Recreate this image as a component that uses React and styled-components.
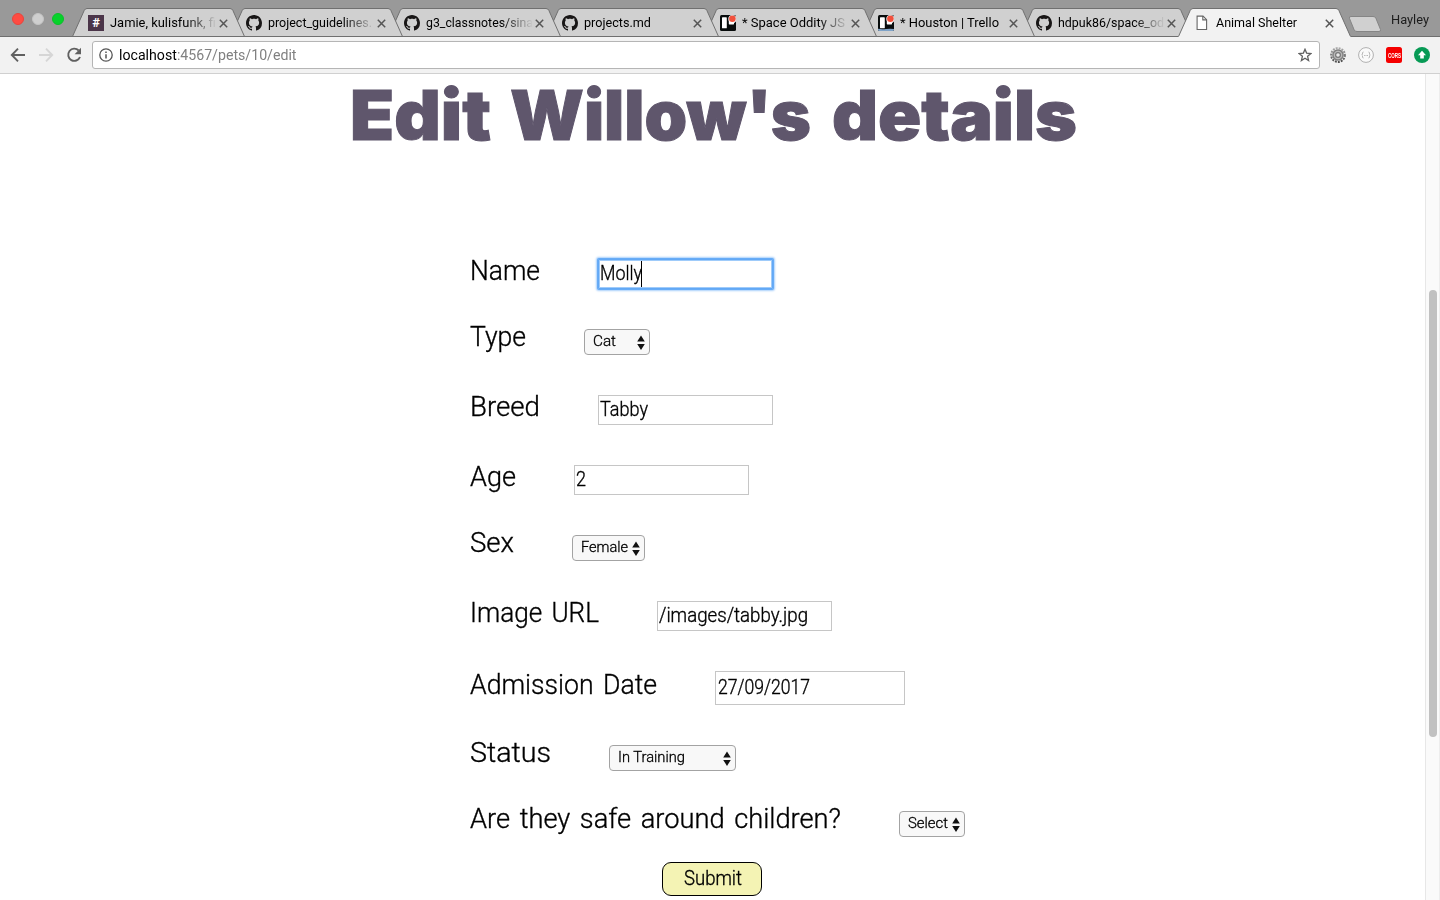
import React, { useLayoutEffect, useRef } from "react";
import styled, { createGlobalStyle } from "styled-components";

const GlobalStyle = createGlobalStyle`
  * { box-sizing: border-box; }
  html, body { margin: 0; padding: 0; background: #fff; overflow: hidden; }
  body { font-family: Roboto, "Liberation Sans", sans-serif; color: #000; }
  svg { display: block; flex: none; }
`;

const FitBox = styled.span`
  display: block;
  flex: none;
  width: ${(p) => p.$width}px;
  white-space: nowrap;
`;

const FitInner = styled.span`
  display: inline-block;
  transform-origin: 0 50%;
`;

/* Condenses or widens a run of text so it spans exactly `width` pixels. */
function FitText({ width, children }) {
  const ref = useRef(null);
  useLayoutEffect(() => {
    const el = ref.current;
    el.style.transform = "none";
    const natural = el.getBoundingClientRect().width;
    if (natural) el.style.transform = `scaleX(${width / natural})`;
  }, [width, children]);
  return (
    <FitBox $width={width}>
      <FitInner ref={ref}>{children}</FitInner>
    </FitBox>
  );
}

const Window = styled.div`
  width: 1440px;
  height: 900px;
  display: flex;
  flex-direction: column;
  overflow: hidden;
  background: #fff;
`;

/* ---------- tab strip ---------- */

const TabStrip = styled.header`
  display: flex;
  height: 37px;
  flex: none;
  background: #999;
  box-shadow: inset 0 -1px #6f6f6f;
`;

const Lights = styled.div`
  display: flex;
  gap: 8px;
  width: 72px;
  padding: 13px 0 0 12px;
  flex: none;
`;

const Light = styled.i`
  width: 12px;
  height: 12px;
  border-radius: 50%;
  background: ${(p) => p.$color};
  border: 1px solid ${(p) => p.$edge};
`;

const Tab = styled.div`
  display: grid;
  width: 173px;
  height: 37px;
  margin-right: -15px;
  flex: none;
  z-index: ${(p) => p.$level};
  > * { grid-area: 1 / 1; }
`;

const TabContent = styled.div`
  display: flex;
  align-items: center;
  padding: 9px 0 0 16px;
  z-index: 1;
`;

const TabIcon = styled.span`
  width: 16px;
  height: 16px;
  margin-right: 6px;
  flex: none;
`;

const TabTitle = styled.span`
  width: 109px;
  height: 18px;
  flex: none;
  font-size: 12.4px;
  line-height: 18px;
  ${(p) => p.$fade && `mask-image: linear-gradient(to right, #000 76px, transparent 107px);`}
`;

const SlackBadge = styled.span`
  display: flex;
  align-items: center;
  justify-content: center;
  width: 16px;
  height: 16px;
  background: #4b3549;
  color: #fff;
  font-size: 13px;
  font-weight: 700;
  line-height: 16px;
`;

const TabShape = ({ active }) => (
  <svg width="173" height="37" viewBox="0 0 173 37">
    <path
      d="M0 37 L1 35.5 L12.2 10.5 Q13.2 8.5 15 8.5 H158 Q160 8.5 160.9 10.5 L172 35.5 L173 37 Z"
      fill={active ? "#f2f2f2" : "#d0d0d0"}
    />
    <path
      d="M0.5 36.5 L12.2 10.5 Q13.2 8.5 15 8.5 H158 Q160 8.5 160.9 10.5 L172.5 36.5"
      fill="none"
      stroke="#707070"
      strokeWidth="1"
    />
    {!active && <path d="M0 36.5 H173" stroke="#6f6f6f" />}
  </svg>
);

const CloseIcon = () => (
  <svg width="9" height="9" viewBox="0 0 9 9">
    <path d="M.8 .8 L8.2 8.2 M8.2 .8 L.8 8.2" stroke="#555" strokeWidth="1.5" />
  </svg>
);

const GithubIcon = () => (
  <svg width="16" height="16" viewBox="0 0 16 16">
    <path
      fill="#181616"
      d="M8 0C3.58 0 0 3.58 0 8c0 3.54 2.29 6.53 5.47 7.59.4.07.55-.17.55-.38 0-.19-.01-.82-.01-1.49-2.01.37-2.53-.49-2.69-.94-.09-.23-.48-.94-.82-1.13-.28-.15-.68-.52-.01-.53.63-.01 1.08.58 1.23.82.72 1.21 1.87.87 2.33.66.07-.52.28-.87.51-1.07-1.78-.2-3.64-.89-3.64-3.95 0-.87.31-1.59.82-2.15-.08-.2-.36-1.02.08-2.12 0 0 .67-.21 2.2.82.64-.18 1.32-.27 2-.27.68 0 1.36.09 2 .27 1.53-1.04 2.2-.82 2.2-.82.44 1.1.16 1.92.08 2.12.51.56.82 1.27.82 2.15 0 3.07-1.87 3.75-3.65 3.95.29.25.54.73.54 1.48 0 1.07-.01 1.93-.01 2.2 0 .21.15.46.55.38A8.013 8.013 0 0016 8c0-4.42-3.58-8-8-8z"
    />
  </svg>
);

const TrelloIcon = ({ tint }) => (
  <svg width="16" height="16" viewBox="0 0 16 16">
    <rect width="16" height="16" rx="1.5" fill="#080c0c" />
    {tint && <path d="M0 13.8 Q4 14.6 8 14 T16 14 V14.5 Q16 16 14.5 16 H1.5 Q0 16 0 14.5 Z" fill="#7fa3c8" />}
    <rect x="2" y="2.3" width="4.8" height="11" rx=".6" fill="#fff" />
    <path d="M8.8 2.3 H14 V8.8 Q14 9.4 13.4 9.4 H9.4 Q8.8 9.4 8.8 8.8 Z" fill="#fff" />
    <circle cx="12.4" cy="4" r="4" fill="#fff" />
    <circle cx="12.4" cy="3.8" r="3.3" fill="#f0503c" />
  </svg>
);

const FileIcon = () => (
  <svg width="16" height="16" viewBox="0 0 16 16">
    <path d="M3.1 1.1 H9 L12.6 4.7 V14.5 H3.1 Z" fill="#fff" stroke="#666" strokeWidth="1.1" />
    <path d="M8.8 1.1 V4.9 H12.6" fill="none" stroke="#666" strokeWidth="1.1" />
  </svg>
);

const NewTab = styled.div`
  margin: 15px 0 0 12px;
  z-index: 20;
`;

const UserName = styled.div`
  margin: 11px 0 0 9px;
  font-size: 12.3px;
  line-height: 18px;
  color: #1c1c1c;
`;

const tabs = [
  { icon: "slack", title: "Jamie, kulisfunk, fi", width: 106, fade: true },
  { icon: "github", title: "project_guidelines.", width: 104, fade: true },
  { icon: "github", title: "g3_classnotes/sina", width: 107, fade: true },
  { icon: "github", title: "projects.md", width: 67 },
  { icon: "trello", title: "* Space Oddity JS", width: 103, fade: true },
  { icon: "trelloTint", title: "* Houston | Trello", width: 99 },
  { icon: "github", title: "hdpuk86/space_od", width: 106, fade: true },
  { icon: "file", title: "Animal Shelter", width: 81, active: true },
];

const favicons = {
  slack: <SlackBadge>#</SlackBadge>,
  github: <GithubIcon />,
  trello: <TrelloIcon />,
  trelloTint: <TrelloIcon tint />,
  file: <FileIcon />,
};

/* ---------- toolbar ---------- */

const Toolbar = styled.div`
  display: flex;
  align-items: center;
  height: 37px;
  flex: none;
  background: #f2f2f2;
  border-bottom: 1px solid #d0d0d0;
  padding: 0 10px;
`;

const NavIcons = styled.div`
  display: flex;
  align-items: center;
  gap: 12px;
  width: 82px;
`;

const AddressBar = styled.div`
  display: flex;
  align-items: center;
  width: 1228px;
  height: 28px;
  padding: 0 7px 0 6px;
  border: 1px solid #b5b5b5;
  border-radius: 3px;
  background: #fff;
`;

const Url = styled.div`
  flex: 1;
  margin-left: 6px;
  font-size: 14px;
  line-height: 20px;
  color: #808080;
  b { font-weight: 400; color: #000; }
`;

const Extensions = styled.div`
  display: flex;
  gap: 12px;
  margin-left: 10px;
`;

const CorsBadge = styled.span`
  display: flex;
  align-items: center;
  width: 16px;
  height: 16px;
  border-radius: 2.5px;
  background: #f50000;
  color: #fff;
  font: 700 7.6px/15px "Liberation Sans", sans-serif;
  padding-left: 1.5px;
`;

const BackArrow = ({ color, flip }) => (
  <svg width="16" height="16" viewBox="0 0 16 16">
    <path
      d="M15 8 H2.2 M8 1.6 L1.8 8 L8 14.4"
      fill="none"
      stroke={color}
      strokeWidth="1.9"
      transform={flip ? "translate(16 0) scale(-1 1)" : undefined}
    />
  </svg>
);

const ReloadIcon = () => (
  <svg width="16" height="16" viewBox="0 0 16 16">
    <path d="M12.7 3.5 A6.1 6.1 0 1 0 14 10" fill="none" stroke="#606060" strokeWidth="1.9" />
    <path d="M15 .8 V7.2 H8.6 Z" fill="#606060" />
  </svg>
);

const InfoIcon = () => (
  <svg width="14" height="14" viewBox="0 0 14 14">
    <circle cx="7" cy="7" r="6.2" fill="none" stroke="#555" strokeWidth="1.3" />
    <path d="M7 6.2 V10.4 M7 3.4 V5" stroke="#555" strokeWidth="1.5" />
  </svg>
);

const StarIcon = () => (
  <svg width="14" height="14" viewBox="0 0 14 14">
    <path
      d="M7 1.3 L8.6 5.1 L12.9 5.5 L9.6 8.3 L10.6 12.5 L7 10.2 L3.4 12.5 L4.4 8.3 L1.1 5.5 L5.4 5.1 Z"
      fill="none"
      stroke="#606060"
      strokeWidth="1.3"
    />
  </svg>
);

const GearIcon = () => (
  <svg width="16" height="16" viewBox="0 0 16 16">
    <defs>
      <linearGradient id="metal" x1="0" y1="0" x2="0" y2="1">
        <stop offset="0" stopColor="#aaa" />
        <stop offset="1" stopColor="#4c4c4c" />
      </linearGradient>
    </defs>
    <circle cx="8" cy="8" r="6.9" fill="none" stroke="url(#metal)" strokeWidth="2" strokeDasharray="1.9 1.1" />
    <circle cx="8" cy="8" r="5.1" fill="#b9b9b9" stroke="#808080" strokeWidth="1.5" />
    <circle cx="8" cy="8" r="2.4" fill="#e8e8e8" stroke="#777" strokeWidth="1.2" />
  </svg>
);

const BracesIcon = () => (
  <svg width="16" height="16" viewBox="0 0 16 16">
    <circle cx="8" cy="8" r="7.4" fill="#fafafa" stroke="#b0b0b0" strokeWidth="1" />
    <path
      d="M5.5 5 Q4.5 5 4.5 6 V7.2 L3.7 8 L4.5 8.8 V10 Q4.5 11 5.5 11 M10.5 5 Q11.5 5 11.5 6 V7.2 L12.3 8 L11.5 8.8 V10 Q11.5 11 10.5 11"
      fill="none"
      stroke="#b0b0b0"
      strokeWidth=".9"
    />
    <path d="M6.2 8.5 H9.9" stroke="#b0b0b0" strokeDasharray="0.9 0.5" />
  </svg>
);

const UpIcon = () => (
  <svg width="16" height="16" viewBox="0 0 16 16">
    <circle cx="8" cy="8" r="8" fill="#079a55" />
    <path d="M8 3.8 L12 8.2 H9.8 V11.6 H6.2 V8.2 H4 Z" fill="#fff" />
  </svg>
);

/* ---------- page ---------- */

const Viewport = styled.div`
  display: flex;
  flex: 1;
  min-height: 0;
`;

const Page = styled.main`
  flex: 1;
  min-width: 0;
  overflow: hidden;
`;

const Heading = styled.h1`
  display: flex;
  height: 174px;
  margin: 0;
  padding: 6px 0 0 350px;
  font: 900 69px/70px Inter, sans-serif;
  color: #5f566c;
  -webkit-text-stroke: 1px #5f566c;
`;

const HeadingWord = styled.span`
  margin-right: ${(p) => p.$gap}px;
`;

const Form = styled.form`
  padding: 6px 0 0 470px;
`;

const Row = styled.div`
  display: flex;
  align-items: flex-start;
  gap: 58px;
  height: ${(p) => p.$height}px;
`;

const Label = styled.label`
  padding-top: 1px;
  font-size: 28px;
  font-weight: 300;
  line-height: 32px;
  word-spacing: 3px;
  -webkit-text-stroke: 0.35px #000;
`;

const Field = styled.div`
  display: flex;
  align-items: center;
  width: ${(p) => (p.$date ? 190 : 175)}px;
  height: ${(p) => (p.$date ? 34 : 30)}px;
  margin-top: ${(p) => (p.$date ? 3 : 5)}px;
  padding: 0 ${(p) => (p.$date ? 2 : 1)}px 1px;
  border: 1px solid ${(p) => (p.$focused ? "#62a8f5" : "#c6c6c6")};
  background: #fff;
  font-size: 19.5px;
  font-weight: 300;
  line-height: 26px;
  -webkit-text-stroke: 0.35px #000;
  ${(p) => p.$focused && `border-radius: 1px; box-shadow: 0 0 0 1px #67acf7, 0 0 2px 2px #a9d0fb, inset 0 0 0 1px #9fcbfa;`}
`;

const Caret = styled.i`
  width: 1px;
  height: 26px;
  margin-left: -1px;
  background: #000;
`;

const Picker = styled.div`
  display: flex;
  align-items: center;
  justify-content: space-between;
  width: ${(p) => p.$width}px;
  height: 26px;
  margin-top: 9px;
  padding: 0 4px 0 8px;
  border: 1px solid #a3a3a3;
  border-radius: 4px;
  background: #f8f8f8;
  font-size: 14px;
  line-height: 20px;
  font-weight: 300;
  -webkit-text-stroke: 0.3px #000;
`;

const PickerValue = styled.div`
  padding-bottom: 2px;
`;

const PickerArrows = () => (
  <svg width="8" height="15" viewBox="0 0 8 15">
    <path d="M4 .4 L7.8 6.6 H.2 Z M4 14.9 L7.8 8.9 H.2 Z" fill="#111" />
  </svg>
);

const Submit = styled.button`
  display: flex;
  justify-content: center;
  align-items: center;
  width: 100px;
  height: 34px;
  margin-left: 192px;
  padding: 0 0 1px 2px;
  border: 1px solid #000;
  border-radius: 9px;
  background: #f4f3b4;
  color: #000;
  font: 300 19.5px/26px Roboto, sans-serif;
  text-align: left;
  -webkit-text-stroke: 0.35px #000;
`;

const ScrollTrack = styled.div`
  width: 15px;
  padding: 216px 0 0 3px;
  background: #fafafa;
  border-left: 1px solid #e7e7e7;
  border-right: 1px solid #ededed;
`;

const ScrollThumb = styled.div`
  width: 8px;
  height: 447px;
  border-radius: 4px;
  background: #c1c1c1;
`;

const rows = [
  { label: "Name", labelWidth: 70, height: 66, type: "text", value: "Molly", valueWidth: 42, focused: true },
  { label: "Type", labelWidth: 56, height: 70, type: "select", value: "Cat", valueWidth: 23, width: 66 },
  { label: "Breed", labelWidth: 70, height: 70, type: "text", value: "Tabby", valueWidth: 48 },
  { label: "Age", labelWidth: 46, height: 66, type: "text", value: "2", valueWidth: 10 },
  { label: "Sex", labelWidth: 44, height: 70, type: "select", value: "Female", valueWidth: 47, width: 73 },
  { label: "Image URL", labelWidth: 129, height: 72, type: "text", value: "/images/tabby.jpg", valueWidth: 149 },
  { label: "Admission Date", labelWidth: 187, height: 68, type: "date", value: "27/09/2017", valueWidth: 92 },
  { label: "Status", labelWidth: 81, height: 66, type: "select", value: "In Training", valueWidth: 67, width: 127 },
  { label: "Are they safe around children?", labelWidth: 371, height: 60, type: "select", value: "Select", valueWidth: 40, width: 66 },
];

function FormRow({ row }) {
  return (
    <Row $height={row.height}>
      <Label>
        <FitText width={row.labelWidth}>{row.label}</FitText>
      </Label>
      {row.type === "select" ? (
        <Picker $width={row.width}>
          <PickerValue>
            <FitText width={row.valueWidth}>{row.value}</FitText>
          </PickerValue>
          <PickerArrows />
        </Picker>
      ) : (
        <Field $date={row.type === "date"} $focused={row.focused}>
          <FitText width={row.valueWidth}>{row.value}</FitText>
          {row.focused && <Caret />}
        </Field>
      )}
    </Row>
  );
}

export default function App() {
  return (
    <Window>
      <GlobalStyle />
      <TabStrip>
        <Lights>
          <Light $color="#ff4b42" $edge="#e8453c" />
          <Light $color="#cfcfcf" $edge="#c4c4c4" />
          <Light $color="#07d22b" $edge="#0bc02a" />
        </Lights>
        {tabs.map((tab, i) => (
          <Tab key={tab.title} $level={tab.active ? 10 : 8 - i}>
            <TabShape active={tab.active} />
            <TabContent>
              <TabIcon>{favicons[tab.icon]}</TabIcon>
              <TabTitle $fade={tab.fade}>
                <FitText width={tab.width}>{tab.title}</FitText>
              </TabTitle>
              <CloseIcon />
            </TabContent>
          </Tab>
        ))}
        <NewTab>
          <svg width="34" height="18" viewBox="0 0 34 18">
            <path
              d="M3 1.5 H25 Q27 1.5 27.8 3 L32.5 14.5 Q33 16.5 31 16.5 H9 Q7 16.5 6.2 15 L1.4 3.2 Q1 1.5 3 1.5 Z"
              fill="#d0d0d0"
              stroke="#858585"
            />
          </svg>
        </NewTab>
        <UserName>
          <FitText width={38}>Hayley</FitText>
        </UserName>
      </TabStrip>

      <Toolbar>
        <NavIcons>
          <BackArrow color="#606060" />
          <BackArrow color="#d6d6d6" flip />
          <ReloadIcon />
        </NavIcons>
        <AddressBar>
          <InfoIcon />
          <Url>
            <FitText width={177.5}>
              <b>localhost</b>:4567/pets/10/edit
            </FitText>
          </Url>
          <StarIcon />
        </AddressBar>
        <Extensions>
          <GearIcon />
          <BracesIcon />
          <CorsBadge>
            <FitText width={13}>CORS</FitText>
          </CorsBadge>
          <UpIcon />
        </Extensions>
      </Toolbar>

      <Viewport>
        <Page>
          <Heading>
            <HeadingWord $gap={19}>
              <FitText width={141}>Edit</FitText>
            </HeadingWord>
            <HeadingWord $gap={21}>
              <FitText width={301}>Willow's</FitText>
            </HeadingWord>
            <HeadingWord $gap={0}>
              <FitText width={245}>details</FitText>
            </HeadingWord>
          </Heading>
          <Form>
            {rows.map((row) => (
              <FormRow key={row.label} row={row} />
            ))}
            <Submit type="button">
              <FitText width={58}>Submit</FitText>
            </Submit>
          </Form>
        </Page>
        <ScrollTrack>
          <ScrollThumb />
        </ScrollTrack>
      </Viewport>
    </Window>
  );
}
